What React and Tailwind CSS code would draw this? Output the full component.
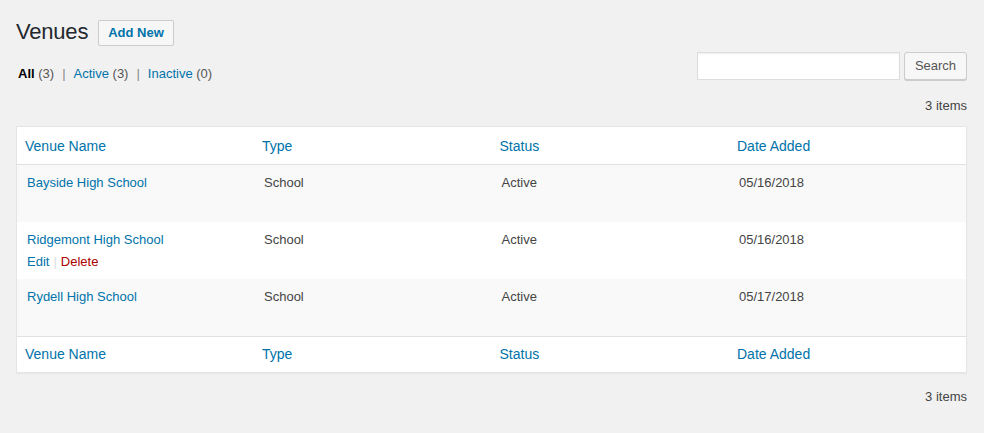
import React from "react";

const venues = [
  { name: "Bayside High School", type: "School", status: "Active", date: "05/16/2018" },
  { name: "Ridgemont High School", type: "School", status: "Active", date: "05/16/2018", actions: true },
  { name: "Rydell High School", type: "School", status: "Active", date: "05/17/2018" },
];

const columns = ["Venue Name", "Type", "Status", "Date Added"];

function HeaderRow({ footer }) {
  return (
    <tr className={footer ? "border-t border-[#e1e1e1]" : "border-b border-[#e1e1e1]"}>
      {columns.map((col) => (
        <th
          key={col}
          className={
            "text-left font-normal px-[8px] leading-[20px] " +
            (footer ? "pt-[7px] pb-[7px]" : "pt-[9px] pb-[7px]")
          }
        >
          <a href="#" className="text-[#0073aa] text-[14px]">
            {col}
          </a>
        </th>
      ))}
    </tr>
  );
}

export default function App() {
  return (
    <div
      className="min-h-[433px] bg-[#f1f1f1] pl-[16px] pr-[17px] pt-[16px] text-[13px] text-[#444]"
      style={{ fontFamily: "'Liberation Sans', Arial, sans-serif" }}
    >
      <div className="flex items-center h-[32px]">
        <h1 className="text-[22px] text-[#23282d] font-normal leading-[30px] tracking-[-0.2px]">Venues</h1>
        <a
          href="#"
          className="ml-[10px] mt-[1px] h-[26px] px-[9px] flex items-center border border-[#ccc] bg-[#f7f7f7] rounded-[2px] text-[#0073aa] text-[13px] font-semibold"
        >
          Add New
        </a>
      </div>

      <div className="flex justify-between items-start mt-[4px]">
        <ul className="flex mt-[12px] ml-[2px] leading-[20px] text-[#666]">
          <li>
            <a href="#" className="text-black font-bold">All</a>{" "}
            <span className="text-[#555]">(3)</span>
            <span className="mx-[8px] text-[#888]">|</span>
          </li>
          <li>
            <a href="#" className="text-[#0073aa]">Active</a>{" "}
            <span className="text-[#555]">(3)</span>
            <span className="mx-[8px] text-[#888]">|</span>
          </li>
          <li>
            <a href="#" className="text-[#0073aa]">Inactive</a>{" "}
            <span className="text-[#555]">(0)</span>
          </li>
        </ul>
        <div className="flex gap-[4px]">
          <input
            type="search"
            className="w-[203px] h-[28px] bg-white border border-[#ddd] shadow-[inset_0_1px_2px_rgba(0,0,0,0.07)] outline-none px-[6px]"
          />
          <button className="h-[28px] w-[63px] border border-[#ccc] bg-[#f7f7f7] rounded-[3px] text-[#555] text-[13px] shadow-[0_1px_0_#ccc]">
            Search
          </button>
        </div>
      </div>

      <div className="text-right mt-[12px] leading-[20px] text-[#444]">3 items</div>

      <table className="w-full table-fixed mt-[10px] bg-white border border-[#e5e5e5] border-collapse shadow-[0_1px_1px_rgba(0,0,0,0.04)]">
        <thead>
          <HeaderRow />
        </thead>
        <tbody>
          {venues.map((v, i) => (
            <tr key={v.name} className={i % 2 === 0 ? "bg-[#f9f9f9]" : "bg-white"}>
              <td className="align-top px-[10px] pt-[8px] pb-[8px] leading-[20px]">
                <a href="#" className="text-[#0073aa]">{v.name}</a>
                <div className={"pt-[2px] leading-[19px] " + (v.actions ? "" : "invisible")}>
                  <a href="#" className="text-[#0073aa]">Edit</a>
                  <span className="mx-[4px] text-[#ddd]">|</span>
                  <a href="#" className="text-[#a00]">Delete</a>
                </div>
              </td>
              <td className="align-top px-[10px] py-[8px] leading-[20px] text-[#444]">{v.type}</td>
              <td className="align-top px-[10px] py-[8px] leading-[20px] text-[#444]">{v.status}</td>
              <td className="align-top px-[10px] py-[8px] leading-[20px] text-[#444]">{v.date}</td>
            </tr>
          ))}
        </tbody>
        <tfoot>
          <HeaderRow footer />
        </tfoot>
      </table>

      <div className="text-right mt-[14px] leading-[20px] text-[#444]">3 items</div>
    </div>
  );
}
